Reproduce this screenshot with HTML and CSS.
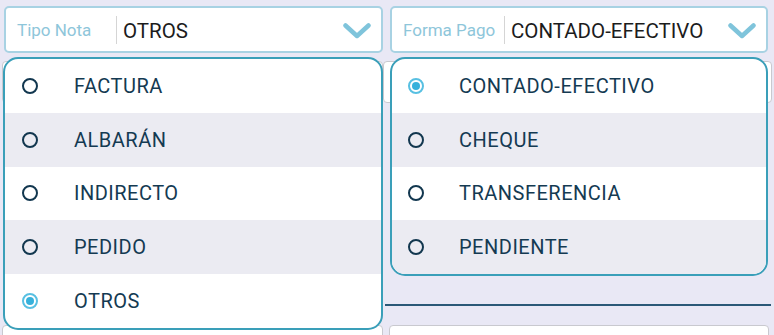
FILE: index.html
```html
<!DOCTYPE html>
<html>
<head>
  <title>Nota</title>
  <link rel="stylesheet" href="styles.css">
</head>
<body>
  <div class="screen">
    <div class="selects">
      <div class="select">
        <span class="select-label">Tipo Nota</span>
        <span class="select-value">OTROS</span>
        <svg class="chevron" width="28" height="16" viewBox="0 0 28 16"><path d="M2.5 2.5 L14 13 L25.5 2.5" fill="none" stroke="#7fc4db" stroke-width="4.5" stroke-linecap="round" stroke-linejoin="round"/></svg>
      </div>
      <div class="select">
        <span class="select-label">Forma Pago</span>
        <span class="select-value">CONTADO-EFECTIVO</span>
        <svg class="chevron" width="28" height="16" viewBox="0 0 28 16"><path d="M2.5 2.5 L14 13 L25.5 2.5" fill="none" stroke="#7fc4db" stroke-width="4.5" stroke-linecap="round" stroke-linejoin="round"/></svg>
      </div>
    </div>

    <div class="form">
      <div class="fields">
        <div class="field"></div>
        <div class="field"></div>
      </div>
      <div class="rule"></div>
      <div class="fields fields-bottom">
        <div class="field"></div>
        <div class="field"></div>
      </div>
    </div>

    <ul class="menu menu-left">
      <li class="option"><span class="radio"></span>FACTURA</li>
      <li class="option alt"><span class="radio"></span>ALBARÁN</li>
      <li class="option"><span class="radio"></span>INDIRECTO</li>
      <li class="option alt"><span class="radio"></span>PEDIDO</li>
      <li class="option"><span class="radio checked"></span>OTROS</li>
    </ul>

    <ul class="menu menu-right">
      <li class="option"><span class="radio checked"></span>CONTADO-EFECTIVO</li>
      <li class="option alt"><span class="radio"></span>CHEQUE</li>
      <li class="option"><span class="radio"></span>TRANSFERENCIA</li>
      <li class="option alt"><span class="radio"></span>PENDIENTE</li>
    </ul>
  </div>
</body>
</html>
```

FILE: styles.css
```css
body {
  margin: 0;
  background-color: #e9e8f5;
  font-family: Roboto, "Liberation Sans", sans-serif;
}

.screen {
  position: relative;
  width: 774px;
  height: 335px;
  overflow: hidden;
}

.selects {
  display: grid;
  grid-template-columns: 379px 378px;
  column-gap: 7px;
  padding: 6px 6px 0 4px;
}

.select {
  display: flex;
  align-items: center;
  height: 47px;
  box-sizing: border-box;
  background-color: #fff;
  border: 2px solid #a8d2e3;
  border-radius: 5px;
  padding: 0 10px 0 11px;
}

.select-label {
  box-sizing: border-box;
  width: 100px;
  color: #8ec6da;
  font-size: 17px;
  border-right: 1px solid #d5d5d5;
  height: 28px;
  line-height: 28px;
  white-space: nowrap;
}

.select:last-child .select-label {
  width: 102px;
}

.select-value {
  flex: 1;
  color: #1c1c1c;
  font-size: 20.5px;
  padding-left: 6px;
  padding-top: 2px;
  white-space: nowrap;
}

.chevron {
  display: block;
  margin-top: 2px;
}

.form {
  padding-top: 8px;
}

.fields {
  display: grid;
  grid-template-columns: 381px 389px;
  column-gap: 0;
  padding-left: 2px;
}

.field {
  height: 40px;
  background-color: #fff;
  border: 1px solid #c9c9cf;
  border-radius: 4px;
}

.rule {
  height: 2px;
  margin: 201px 3px 0 385px;
  background-color: #2b5877;
}

.fields-bottom {
  margin-top: 19px;
  grid-template-columns: 381px 380px;
  column-gap: 6px;
}

.menu {
  position: absolute;
  top: 57px;
  margin: 0;
  padding: 0;
  list-style: none;
  border: 2px solid #3a9fb9;
  border-radius: 15px;
  overflow: hidden;
  background-color: #fff;
}

.menu-left {
  left: 3px;
  width: 380px;
  box-sizing: border-box;
}

.menu-right {
  left: 390px;
  width: 378px;
  box-sizing: border-box;
}

.option {
  display: flex;
  align-items: center;
  height: 53.8px;
  padding-left: 17px;
  color: #143a52;
  font-size: 20px;
  letter-spacing: 0.5px;
}

.menu-right .option {
  padding-left: 16px;
}

.option.alt {
  background-color: #ebebf2;
}

.radio {
  width: 16px;
  height: 16px;
  box-sizing: border-box;
  border: 2px solid #12374f;
  border-radius: 50%;
  margin-right: 36px;
  flex-shrink: 0;
  position: relative;
}

.menu-right .radio {
  margin-right: 35px;
}

.radio.checked {
  border-color: #58c0e2;
}

.radio.checked::after {
  content: "";
  position: absolute;
  left: 2px;
  top: 2px;
  width: 8px;
  height: 8px;
  border-radius: 50%;
  background-color: #37b1db;
}
```
